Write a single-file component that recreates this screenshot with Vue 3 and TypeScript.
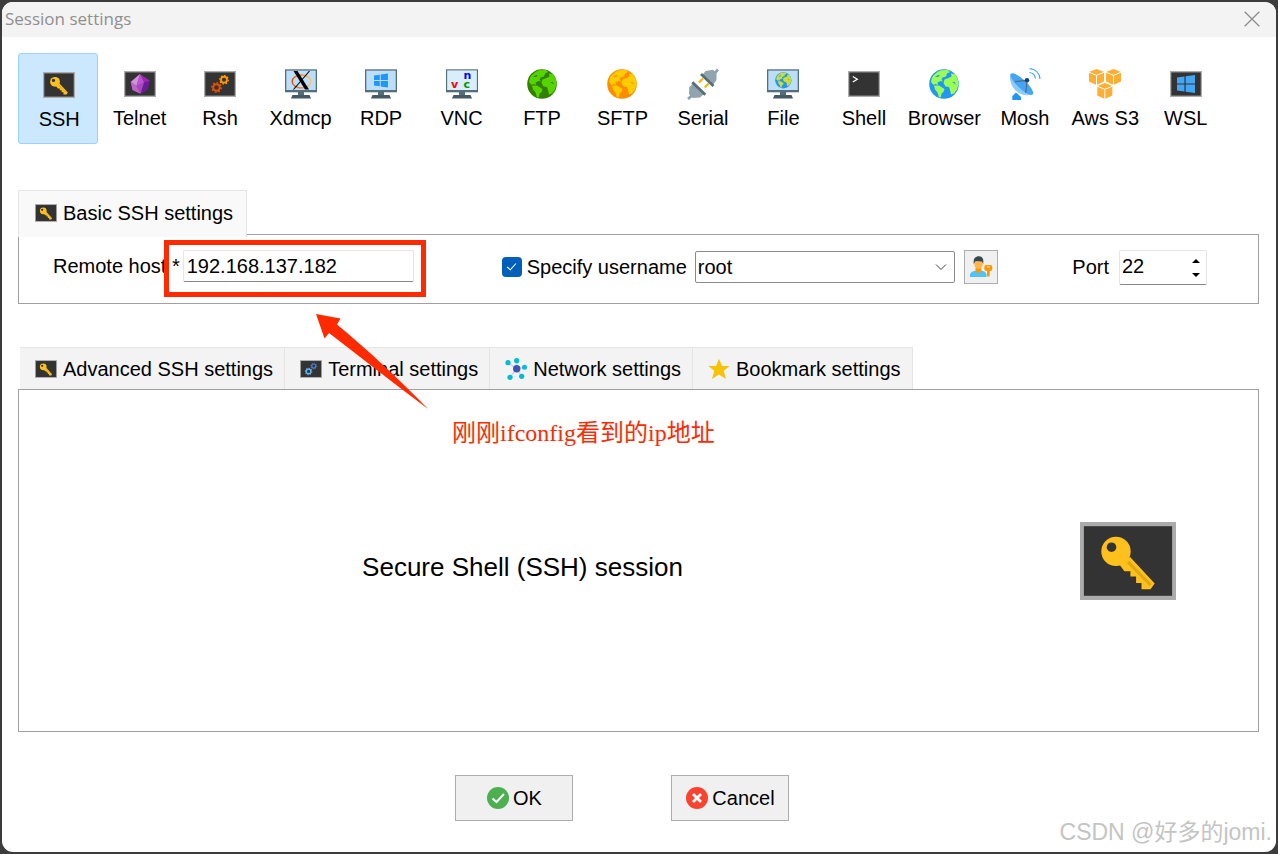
<script setup lang="ts">
import { ref } from 'vue'

interface SessionType {
  label: string
  icon: string
  tone?: string
}

const sessionTypes: SessionType[] = [
  { label: 'SSH', icon: 'key' },
  { label: 'Telnet', icon: 'gem' },
  { label: 'Rsh', icon: 'gears', tone: 'warm' },
  { label: 'Xdmcp', icon: 'xorg' },
  { label: 'RDP', icon: 'rdp' },
  { label: 'VNC', icon: 'vnc' },
  { label: 'FTP', icon: 'globe', tone: 'green' },
  { label: 'SFTP', icon: 'globe', tone: 'amber' },
  { label: 'Serial', icon: 'plug' },
  { label: 'File', icon: 'file', tone: 'olive' },
  { label: 'Shell', icon: 'shell' },
  { label: 'Browser', icon: 'globe', tone: 'blue' },
  { label: 'Mosh', icon: 'dish' },
  { label: 'Aws S3', icon: 'cubes' },
  { label: 'WSL', icon: 'wsl' },
]

const advancedTabs: SessionType[] = [
  { label: 'Advanced SSH settings', icon: 'key' },
  { label: 'Terminal settings', icon: 'gears', tone: 'cool' },
  { label: 'Network settings', icon: 'network' },
  { label: 'Bookmark settings', icon: 'star' },
]

const activeType = ref('SSH')
const host = ref('192.168.137.182')
const useName = ref(true)
const userName = ref('root')
const port = ref(22)
</script>

<template>
  <svg class="sprite" aria-hidden="true">
    <defs>
      <linearGradient id="ring" x1="0" x2="1">
        <stop offset="0" stop-color="#e65100" />
        <stop offset="1" stop-color="#ffc46b" />
      </linearGradient>
      <g id="screen">
        <rect y="3" width="32" height="26" fill="#ababab" />
        <rect x="1.3" y="4.4" width="29.4" height="23.2" fill="#333" />
      </g>
      <g id="monitor">
        <rect x="13" y="24" width="6" height="4" fill="#546e7a" />
        <path d="M6 30.5 7.5 27h17l1.5 3.5z" fill="#455a64" />
        <rect y="1.3" width="32" height="23" fill="#546e7a" />
        <rect x="1.3" y="2.6" width="29.4" height="19.4" fill="#bbdefb" />
      </g>
      <g id="world">
        <circle cx="16" cy="16" r="14.8" class="sea" />
        <path class="land" d="M13 2.2 20 2l2 2-3 1.500-1 3-3.500 1-1 2.500 2 1.500-3-.5-3 1.500.5 2.500-2.500-1-2 1-2.500-3 1-4.500C5.500 7 8.500 4 13 2.200z" />
        <path class="land" d="M6 17.500l5 0 5.500 3.500-1 3-2 1.500-.5 3.500-2 .5-1.500-5-2.500-3z" />
        <path class="land" d="M20.500 10l3-1.500-.5-3 3.500.5c2.500 2.500 4 6 4 10l-1.500 5.500-3 4-3 1-1-4.500-1-3-3.500-.5-2-3.500 1-3.500z" />
        <path class="sea" d="M7 9l3-2 2 .5-2 1.500z M24 14l2.500 0 1.500 2.500z" />
      </g>
      <g id="gear">
        <circle r="3.300" fill="none" stroke="currentColor" stroke-width="2" />
        <circle r="4.700" fill="none" stroke="currentColor" stroke-width="1.500" pathLength="16" stroke-dasharray="1 1" />
      </g>
      <g id="panes">
        <path d="M0 2.200 6.200 1.300V7.600H0zM7.200 1.100 15 0V7.600H7.200zM0 8.500H6.200V14.700L0 13.800zM7.200 8.500H15V16L7.200 14.900z" />
      </g>
      <g id="cube">
        <path d="M7.500 0 15 3V12.600L7.500 16 0 12.600V3z" fill="#ffad33" />
        <path d="M0 3.300 7.500 6.300 15 3.300M7.500 6.300V16" fill="none" stroke="#fff" stroke-width="1" />
      </g>
    </defs>

    <symbol id="i-key" viewBox="0 3 32 26">
      <use href="#screen" />
      <path d="M16.700 14.700 24.900 23.500 23.500 25.400H20.500V23.300H18.700V21.200H16.800V19.400H14.800L13 17z" fill="#fec01c" />
      <circle cx="12" cy="12.800" r="4.900" fill="#fec01c" />
      <circle cx="10.500" cy="11.400" r="1.600" fill="#333" />
      <path d="M16 16.300 23.500 24" stroke="#dfa616" stroke-width="1" />
    </symbol>
    <symbol id="i-gem" viewBox="0 3 32 26">
      <use href="#screen" />
      <path d="M16 6 25.700 12.500 23.500 21.500 16.500 25.700 8.500 22 6.700 14z" fill="#9c27b0" />
      <path d="M16 6 12.500 18 6.700 14z" fill="#ce93d8" />
      <path d="M16 6 20 14.500 12.500 18z" fill="#ba55cc" />
      <path d="M12.500 18 20 14.500 19.500 20.500 16.500 25.700z" fill="#ab47bc" />
      <path d="M6.700 14 12.500 18 16.500 25.700 8.500 22z" fill="#b968c8" />
      <path d="M20 14.500 25.700 12.500 23.500 21.500 16.500 25.700z" fill="#6a1b9a" />
    </symbol>
    <symbol id="i-gears" viewBox="0 3 32 26">
      <use href="#screen" />
      <use href="#gear" class="gear-a" transform="translate(12.500 19.500)" />
      <use href="#gear" class="gear-b" transform="translate(20 11.700) scale(.9)" />
    </symbol>
    <symbol id="i-shell" viewBox="0 3 32 26">
      <use href="#screen" />
      <path d="M4.800 8.500 9.300 11.200 4.800 14" fill="none" stroke="#fff" stroke-width="1.300" />
    </symbol>
    <symbol id="i-wsl" viewBox="0 3 32 26">
      <use href="#screen" />
      <use href="#panes" fill="#42a5f5" transform="translate(7 7) scale(1.200 1.130)" />
    </symbol>

    <symbol id="i-xorg" viewBox="0 0 32 32">
      <use href="#monitor" />
      <ellipse cx="16.500" cy="13.500" rx="9.300" ry="6.500" fill="none" stroke="url(#ring)" stroke-width="1.500" />
      <path d="M8.500 3h4L24 21.500h-4z" fill="#000" />
      <path d="M24.500 3 8.500 21.500" stroke="#000" stroke-width="1.100" />
    </symbol>
    <symbol id="i-rdp" viewBox="0 0 32 32">
      <use href="#monitor" />
      <use href="#panes" fill="#2196f3" transform="translate(9 5.500) scale(.93 .87)" />
    </symbol>
    <symbol id="i-vnc" viewBox="0 0 32 32">
      <use href="#monitor" />
      <rect x="1.300" y="2.600" width="29.400" height="19.400" fill="#d9edfb" />
    </symbol>
    <symbol id="i-file" viewBox="0 0 32 32">
      <use href="#monitor" />
      <use href="#world" transform="translate(7.500 3.500) scale(.55)" />
    </symbol>
    <symbol id="i-globe" viewBox="0 0 32 32">
      <use href="#world" />
    </symbol>
    <symbol id="i-plug" viewBox="0 0 32 32">
      <path d="M12 14.500 16 10.500M17.700 19.600 21.700 15.500" stroke="#ffb300" stroke-width="2.200" />
      <path d="M27 6 31 1.500M6 26.500 1 31" stroke="#90a4ae" stroke-width="2.800" />
      <path d="M15 7.500 18.500 3 26 1.800 29.500 5 29.500 12 26 17z" fill="#90a4ae" />
      <path d="M6 15.500 2.300 19 2 26 5.500 30 13 29.500 17 26z" fill="#90a4ae" />
      <path d="M14 6 26.500 18M5.300 14.300 18.300 26.800" stroke="#546e7a" stroke-width="2.800" />
    </symbol>
    <symbol id="i-dish" viewBox="0 0 32 32">
      <path d="M3.300 32V28L7 24.500 12 29V32z" fill="#2196f3" />
      <path d="M1.500 6C-1.500 16 9 31 23.500 26.500z" fill="#90caf9" />
      <ellipse cx="12.800" cy="16" rx="15" ry="4.500" transform="rotate(43 12.800 16)" fill="#42a5f5" />
      <path d="M6 13.700 18 12.300 16.700 25" fill="none" stroke="#546e7a" stroke-width="1.200" />
      <circle cx="18" cy="12.300" r="2.200" fill="#0d3c91" />
      <path d="M20.500 4.500C24 5 26 7 26.500 10.500M20.500.7C26.500 1 30.500 5 31 11" fill="none" stroke="#42a5f5" stroke-width="1.200" />
    </symbol>
    <symbol id="i-cubes" viewBox="0 0 32 32">
      <use href="#cube" transform="translate(0 1)" />
      <use href="#cube" transform="translate(17 1)" />
      <path d="M15.800 14 24 17.500V29H7.600V17.500z" fill="#fff" />
      <use href="#cube" transform="translate(8.300 15)" />
    </symbol>
    <symbol id="i-network" viewBox="0 0 22 22">
      <path d="M3 4.700 11.700 10.700V2.700M19.700 9.300 11.700 10.700 16.700 18.300M11.700 10.700 5 19.300" fill="none" stroke="#cfd8dc" stroke-width="1.500" />
      <circle cx="11.700" cy="10.700" r="3.700" fill="#3f51b5" />
      <g fill="#00bcd4">
        <circle cx="3" cy="4.700" r="2.600" /><circle cx="11.700" cy="2.700" r="2.600" />
        <circle cx="19.500" cy="9.300" r="2.500" /><circle cx="16.700" cy="18.300" r="2.600" />
        <circle cx="5" cy="19.300" r="2.600" />
      </g>
    </symbol>
    <symbol id="i-star" viewBox="0 0 22 22">
      <path d="M11 .8 14 8H21.700L15.700 12.800 18 21 11 16.600 4 21 6.300 12.800.300 8H8z" fill="#f7c208" />
    </symbol>
  </svg>

  <div class="desktop">
    <div class="dialog" role="dialog" aria-labelledby="dialog-title">
      <header class="titlebar">
        <h1 id="dialog-title">Session settings</h1>
        <button class="close" type="button" aria-label="Close">
          <svg viewBox="0 0 16 16"><path d="M.7.7 15.300 15.300M15.300.7.7 15.300" /></svg>
        </button>
      </header>

      <main>
        <nav class="types">
          <button
            v-for="t in sessionTypes"
            :key="t.label"
            type="button"
            class="type"
            :class="{ active: t.label === activeType }"
            @click="activeType = t.label"
          >
            <svg class="type-icon" :class="t.tone" viewBox="0 0 32 32">
              <use :href="`#i-${t.icon}`" width="32" height="32" />
              <g v-if="t.icon === 'vnc'" class="letters">
                <text x="5" y="20" fill="#f00">v</text>
                <text x="17.5" y="10.500" fill="#00f">n</text>
                <text x="17.5" y="20" fill="#090">c</text>
              </g>
            </svg>
            <span>{{ t.label }}</span>
          </button>
        </nav>

        <section class="basic">
          <div class="tabs">
            <button type="button" class="tab current">
              <svg class="tab-icon"><use href="#i-key" /></svg>Basic SSH settings
            </button>
          </div>
          <div class="panel fields">
            <div class="field host">
              <label for="host">Remote host *</label>
              <div class="marked">
                <input id="host" v-model="host" class="box" type="text" />
                <span class="marker"></span>
              </div>
            </div>
            <div class="field user">
              <input id="use-name" v-model="useName" type="checkbox" />
              <label for="use-name">Specify username</label>
              <div class="combo">
                <select v-model="userName" aria-label="Username">
                  <option>root</option>
                </select>
                <svg viewBox="0 0 12 8"><path d="M1 1.500 6 6.500 11 1.500" /></svg>
              </div>
              <button class="credentials" type="button" aria-label="Manage credentials">
                <svg viewBox="0 0 22 22">
                  <path d="M0 21V18.500C1 15.500 4 15 6 14.500h5c2 .5 5 1 5.500 4V21z" fill="#4fc3f7" />
                  <path d="M5.500 12h6v3L8.500 17.500 5.500 15z" fill="#ff9800" />
                  <ellipse cx="8.500" cy="7.800" rx="4.300" ry="5.300" fill="#ffb74d" />
                  <path d="M3.800 8C3 2.500 5.500.3 9 .3c3.500 0 5 3 4.200 7.700L12 5.500 5.500 5z" fill="#37474f" />
                  <rect x="14.300" y="9" width="8" height="6" rx="2" fill="#ff9800" />
                  <path d="M17 14h2.700v6.500H17z" fill="#ff9800" />
                  <path d="M17 11h2.700" stroke="#fff3e0" stroke-width="1" />
                </svg>
              </button>
            </div>
            <div class="field port">
              <label for="port">Port</label>
              <div class="spin box">
                <input id="port" v-model.number="port" type="number" />
                <div class="steps">
                  <button type="button" aria-label="Increase port" @click="port++">
                    <svg viewBox="0 0 8 4"><path d="M0 4 4 0 8 4z" /></svg>
                  </button>
                  <button type="button" aria-label="Decrease port" @click="port--">
                    <svg viewBox="0 0 8 4"><path d="M0 0 4 4 8 0z" /></svg>
                  </button>
                </div>
              </div>
            </div>
          </div>
        </section>

        <section class="advanced">
          <div class="tabs lower">
            <button v-for="t in advancedTabs" :key="t.label" type="button" class="tab">
              <svg class="tab-icon" :class="t.tone"><use :href="`#i-${t.icon}`" /></svg>{{ t.label }}
            </button>
          </div>
          <div class="panel summary">
            <p>Secure Shell (SSH) session</p>
            <svg class="big-icon"><use href="#i-key" /></svg>
          </div>
          <svg class="arrow" viewBox="0 0 112 95" aria-hidden="true">
            <path d="M0 0 24.500 4.500 21 10.500C52 36 84 66 112 95 78 70 46 44 13 19L8.500 24.500z" fill="#ff2a00" />
          </svg>
          <p class="note">刚刚ifconfig看到的ip地址</p>
        </section>

        <footer>
          <button type="button" class="action">
            <svg viewBox="0 0 22 22">
              <circle cx="11" cy="11" r="11" fill="#4caf50" />
              <path d="M5.500 11.500 9.500 15 17 7" fill="none" stroke="#fff" stroke-width="2" />
            </svg>OK
          </button>
          <button type="button" class="action">
            <svg viewBox="0 0 22 22">
              <circle cx="11" cy="11" r="11" fill="#f9432f" />
              <path d="M7 7 15 15M15 7 7 15" fill="none" stroke="#fff" stroke-width="2.800" />
            </svg>Cancel
          </button>
        </footer>
      </main>
      <span class="credit">CSDN @好多的jomi.</span>
    </div>
  </div>
</template>

<style>
body {
  background: #3c3c3c;
}
</style>

<style scoped>
.sprite {
  position: absolute;
  width: 0;
  height: 0;
}
.desktop {
  box-sizing: border-box;
  min-height: 100vh;
  padding: 2px;
  display: flex;
  background: #3c3c3c;
  font: 20px/24px "Liberation Sans", Arial, "Noto Sans CJK SC", sans-serif;
  color: #000;
}
button,
input,
select {
  box-sizing: border-box;
  margin: 0;
  font: inherit;
  color: inherit;
}
.dialog {
  position: relative;
  flex: 1;
  display: flex;
  flex-direction: column;
  overflow: hidden;
  border-radius: 11px;
  background: #fff;
}
.titlebar {
  box-sizing: border-box;
  display: flex;
  align-items: center;
  justify-content: space-between;
  height: 35px;
  padding: 0 16px 2px 3px;
  background: #f3f3f3;
}
h1 {
  margin: 0;
  font: 17px/24px "Open Sans", "Noto Sans", sans-serif;
  color: #8f8f8f;
}
.close {
  display: flex;
  padding: 0;
  border: 0;
  background: none;
}
.close svg {
  width: 16px;
  height: 16px;
  fill: none;
  stroke: #8c8c8c;
  stroke-width: 1.3;
}
main {
  flex: 1;
  display: flex;
  flex-direction: column;
  padding: 16px 17px 31px 16px;
}
.types {
  display: grid;
  grid-template-columns: repeat(15, minmax(0, 1fr));
  margin-right: 34px;
}
.type {
  display: flex;
  flex-direction: column;
  align-items: center;
  gap: 6px;
  height: 91px;
  padding: 14px 0 0 2px;
  border: 1px solid transparent;
  border-radius: 3px;
  background: none;
  white-space: nowrap;
}
.type.active {
  padding-top: 15px;
  border-color: #99d1ff;
  background: #cce8ff;
}
.type-icon {
  flex: none;
  width: 32px;
  height: 32px;
}
.warm { --a: #e65100; --b: #ff9800; }
.cool { --a: #64b5f6; --b: #4f7fd0; }
.green { --sea: #338000; --land: #55d400; }
.amber { --sea: #ff8c00; --land: #ffcc00; }
.blue { --sea: #2196f3; --land: #99ff55; }
.olive { --sea: #2196f3; --land: #cddc39; }
.gear-a { color: var(--a); }
.gear-b { color: var(--b); }
.sea { fill: var(--sea); }
.land { fill: var(--land); }
.letters {
  font: bold 11px "DejaVu Sans", sans-serif;
}
.basic {
  margin-top: 46px;
}
.tabs {
  display: flex;
}
.tab {
  display: flex;
  align-items: center;
  gap: 6px;
  height: 42px;
  padding: 0 11px 0 15px;
  border: 1px solid #e5e5e5;
  border-width: 1px 1px 0 0;
  background: #f3f3f3;
  white-space: nowrap;
}
.tab.current {
  position: relative;
  height: 47px;
  margin-bottom: -3px;
  padding: 0 13px 2px 16px;
  border-left-width: 1px;
  background: #f9f9f9;
}
.tab-icon {
  width: 22px;
  height: 22px;
}
.lower {
  padding-left: 2px;
}
.panel {
  border: 1px solid #a0a0a0;
}
.fields {
  display: flex;
  align-items: flex-start;
  height: 53px;
  padding: 15px 51px 0 34px;
}
.field {
  display: flex;
  align-items: center;
  white-space: nowrap;
}
.host {
  flex: 361 1 0;
}
.user {
  flex: 497 1 0;
  margin: 0 74px 0 88px;
}
.marked {
  position: relative;
  flex: 1;
  display: flex;
  margin-left: 3px;
}
.box {
  border: 1px solid #e5e5e5;
  border-bottom-color: #868686;
  border-radius: 2px;
  background: #fff;
}
.marked input {
  width: 100%;
  min-width: 0;
  height: 32px;
  padding: 0 3px;
}
.marker {
  position: absolute;
  inset: -10px -12px -15px -19px;
  border: 5px solid #ff2a00;
  pointer-events: none;
}
input[type="checkbox"] {
  appearance: none;
  position: relative;
  width: 20px;
  height: 20px;
  margin-right: 5px;
  border-radius: 4px;
  background: #005fb8;
}
input[type="checkbox"]::after {
  content: "";
  position: absolute;
  left: 7px;
  top: 4px;
  width: 4px;
  height: 8px;
  border: solid #fff;
  border-width: 0 1px 1px 0;
  transform: rotate(42deg);
}
.combo {
  position: relative;
  flex: 1;
  display: flex;
  margin: 0 9px 0 8px;
}
.combo select {
  appearance: none;
  width: 100%;
  height: 32px;
  padding: 0 2px;
  border: 1px solid #8a8a8a;
  border-radius: 2px;
  background: #fff;
}
.combo svg {
  position: absolute;
  right: 8px;
  top: 12px;
  width: 12px;
  height: 8px;
  fill: none;
  stroke: #404040;
  pointer-events: none;
}
.credentials {
  display: flex;
  align-items: center;
  justify-content: center;
  width: 34px;
  height: 34px;
  padding: 0;
  border: 1px solid #adadad;
  background: #f0f0f0;
}
.credentials svg {
  width: 22px;
  height: 22px;
  overflow: visible;
}
.port {
  gap: 10px;
}
.port label {
  padding-bottom: 2px;
}
.spin {
  display: flex;
  width: 86px;
  height: 33px;
}
.spin input {
  flex: 1;
  min-width: 0;
  padding: 0 2px 3px;
  border: 0;
  background: none;
  appearance: textfield;
}
.spin input::-webkit-inner-spin-button {
  appearance: none;
}
.steps {
  display: flex;
  flex-direction: column;
  justify-content: center;
  gap: 10px;
  padding-right: 6px;
}
.steps button {
  display: flex;
  padding: 0;
  border: 0;
  background: none;
}
.steps svg {
  width: 8px;
  height: 4px;
}
.advanced {
  position: relative;
  flex: 1;
  display: flex;
  flex-direction: column;
  margin-top: 43px;
}
.summary {
  flex: 1;
  display: grid;
  grid-template-columns: 1fr 260px;
  align-items: center;
  justify-items: center;
}
.summary p {
  margin: 0;
  padding: 12px 0 0 28px;
  font-size: 26px;
  line-height: 32px;
}
.big-icon {
  width: 96px;
  height: 80px;
}
.arrow {
  position: absolute;
  left: 298px;
  top: -33px;
  width: 112px;
  height: 95px;
  pointer-events: none;
}
.note {
  position: absolute;
  left: 434px;
  top: 70px;
  margin: 0;
  font: 24px/32px "Liberation Serif", "Noto Sans CJK SC", serif;
  color: #ff2a00;
}
footer {
  display: flex;
  justify-content: center;
  gap: 98px;
  margin-top: 43px;
  padding-right: 33px;
}
.action {
  display: flex;
  align-items: center;
  justify-content: center;
  gap: 4px;
  width: 118px;
  height: 46px;
  padding: 0 0 0 1px;
  border: 1px solid #adadad;
  background: #f0f0f0;
}
.action svg {
  width: 22px;
  height: 22px;
}
.credit {
  position: absolute;
  right: 4px;
  bottom: 4px;
  font-size: 23px;
  line-height: 32px;
  color: #c4c4c4;
  text-shadow: 1px 1px 0 #fff;
}
</style>
